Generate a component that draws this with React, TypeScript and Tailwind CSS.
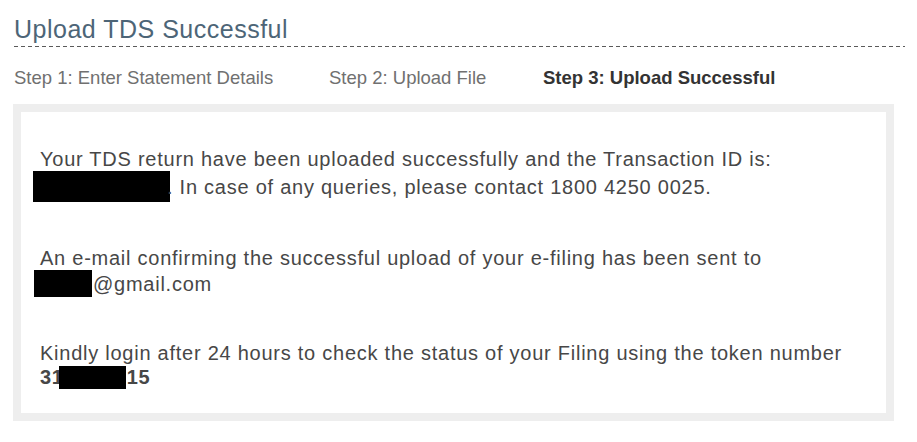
export default function App() {
  return (
    <div className="w-[917px] h-[442px] bg-white overflow-hidden pl-[14px] font-['Liberation_Sans',Arial,sans-serif]">
      <div className="pt-[15px] text-[25px] leading-[28px] tracking-[0.5px] text-[#4d6577] w-[891px]">
        Upload TDS Successful
      </div>
      <div className="mt-[3px] h-px w-[891px] bg-[repeating-linear-gradient(90deg,#5a5a5a_0px,#5a5a5a_4px,transparent_4px,transparent_7px)]" />
      <div className="mt-[20px] flex items-baseline text-[18.5px] leading-[22px] text-[#707070]">
        <span className="w-[315px]">Step 1: Enter Statement Details</span>
        <span className="w-[214px]">Step 2: Upload File</span>
        <span className="font-bold text-[#333333]">Step 3: Upload Successful</span>
      </div>
      <div className="mt-[15px] -ml-px w-[881px] h-[317px] border-[8px] border-[#eeeeee] bg-white pl-[19px] pt-[35px] text-[20px] leading-[24px] tracking-[0.75px] text-[#474747]">
        <div>
          <div>Your TDS return have been uploaded successfully and the Transaction ID is:</div>
          <div className="flex items-center">
            <span className="inline-block w-[137px] h-[31px] bg-black -ml-[7px]" />
            <span className="-ml-[3px]">. In case of any queries, please contact 1800 4250 0025.</span>
          </div>
        </div>
        <div className="mt-[44px]">
          <div>An e-mail confirming the successful upload of your e-filing has been sent to</div>
          <div className="flex items-center">
            <span className="inline-block w-[58px] h-[27px] bg-black -ml-[6px]" />
            <span className="ml-px">@gmail.com</span>
          </div>
        </div>
        <div className="mt-[44px]">
          <div>Kindly login after 24 hours to check the status of your Filing using the token number</div>
          <div className="flex items-center font-bold">
            <span>31</span>
            <span className="inline-block w-[67px] h-[23px] bg-black -ml-[5px]" />
            <span className="ml-px">15</span>
          </div>
        </div>
      </div>
    </div>
  );
}
